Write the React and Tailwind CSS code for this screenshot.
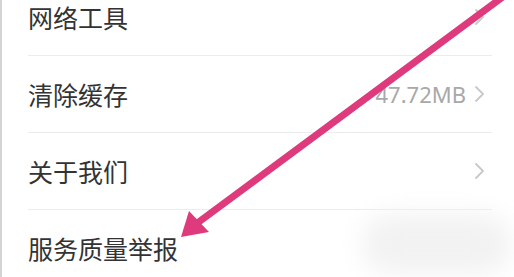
import React from "react";

const rows = [
  { label: "网络工具" },
  { label: "清除缓存", value: "47.72MB" },
  { label: "关于我们" },
  { label: "服务质量举报", noChevron: true },
];

function Chevron() {
  return (
    <svg width="12" height="18" viewBox="0 0 12 18" fill="none">
      <path d="M2 2L9 9L2 16" stroke="#c8c8c8" strokeWidth="1.8" strokeLinecap="round" strokeLinejoin="round" />
    </svg>
  );
}

export default function App() {
  return (
    <div
      className="relative w-[514px] h-[277px] overflow-hidden bg-white border-l-2 border-[#d4d4d4]"
      style={{ fontFamily: '"Noto Sans CJK SC", "Noto Sans", sans-serif' }}
    >
      <div className="-mt-[21px]">
        {rows.map((row, i) => (
          <div key={row.label}>
            <div className="h-[76px] flex items-center justify-between pl-[26px] pr-[28px]">
              <span className="text-[25px] text-[#333333] leading-none">{row.label}</span>
              {!row.noChevron && (
                <div className="flex items-center gap-[8px]">
                  {row.value && (
                    <span className="text-[22px] text-[#a8a8a8] leading-none" style={{ fontFamily: '"Noto Sans", sans-serif' }}>
                      {row.value}
                    </span>
                  )}
                  <Chevron />
                </div>
              )}
            </div>
            {i < rows.length - 1 && <div className="h-px bg-[#ececec] ml-[26px] mr-[22px]" />}
          </div>
        ))}
      </div>

      {/* blurred smudge at bottom right */}
      <div className="absolute left-[360px] top-[214px] w-[150px] h-[60px] rounded-full bg-[#f2f2f2] blur-[12px]" />

      {/* annotation arrow */}
      <svg className="absolute inset-0" width="514" height="277" viewBox="0 0 514 277">
        <line x1="502" y1="-4" x2="194" y2="224" stroke="#de3a7c" strokeWidth="7" strokeLinecap="round" />
        <polygon points="179,237 187,211 207,232" fill="#de3a7c" />
      </svg>
    </div>
  );
}
